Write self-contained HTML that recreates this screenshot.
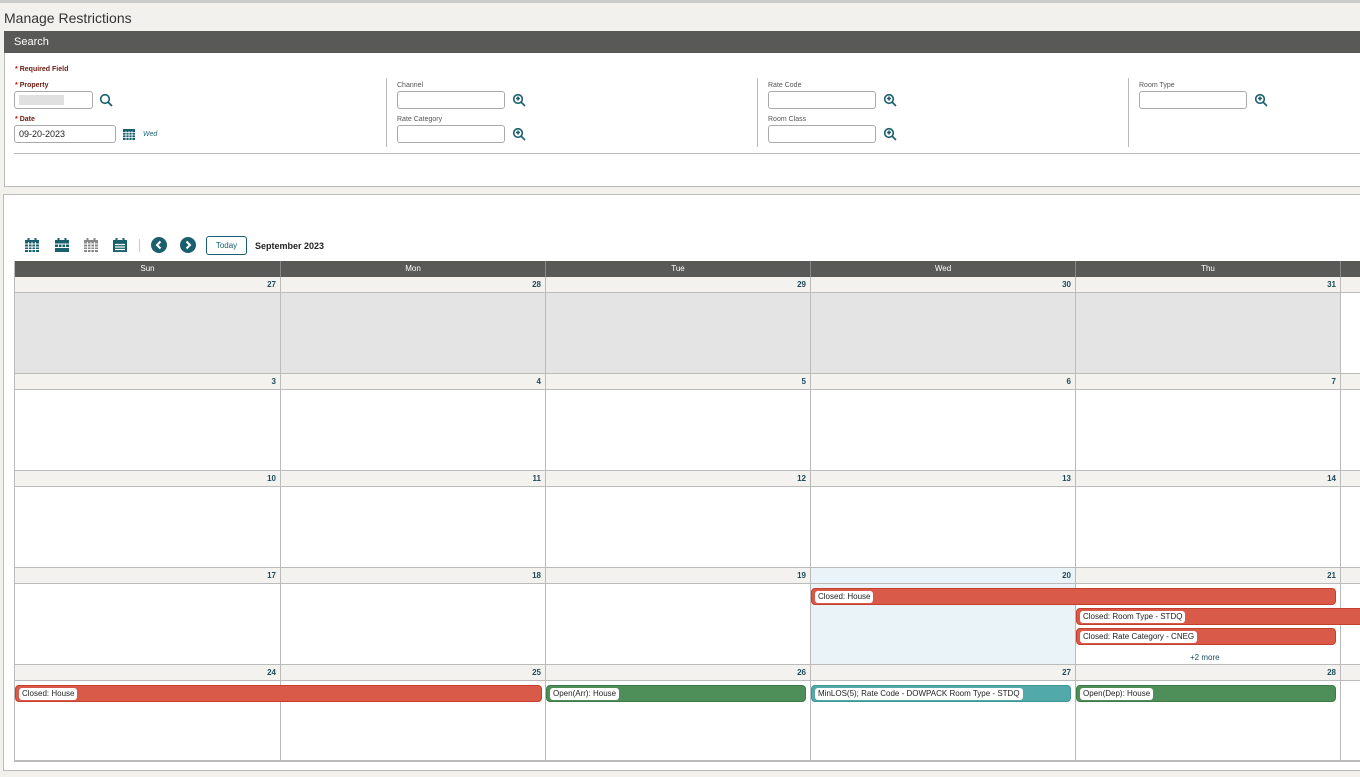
<!DOCTYPE html>
<html><head><meta charset="utf-8"><style>
*{margin:0;padding:0;box-sizing:border-box}
body{width:1360px;height:777px;overflow:hidden;background:#f2f1ee;font-family:"Liberation Sans",sans-serif;position:relative;color:#222}
.a{position:absolute}
.lbl{position:absolute;font-size:7px;color:#555}
.req{color:#6b1a10;font-weight:bold}
.req::before{content:"*";color:#d00;margin-right:2px}
.inp{position:absolute;height:18px;border:1px solid #aaa;border-radius:3px;background:#fff;font-size:9px;padding:3px 4px}
.vd{position:absolute;width:1px;background:#bbb;top:78px;height:69px}
.hd{position:absolute;top:261px;height:16px;background:#595957;color:#fff;font-size:8px;text-align:center;line-height:16px;border-right:1px solid #888}
.ds{position:absolute;height:16px;background:#f3f2ee;border-bottom:1px solid #bbb;border-right:1px solid #bbb;font-size:8px;font-weight:bold;color:#1d4a5c;text-align:right;padding-right:4px;line-height:15px}
.cb{position:absolute;height:81px;border-right:1px solid #bbb;border-bottom:1px solid #bbb;background:#fff}
.ev{position:absolute;height:17px;border-radius:4px;font-size:8px;padding:2px 3px}
.ev span{background:#fff;border-radius:3px;padding:1px 3px;display:inline-block;line-height:10px;color:#222}
.r{background:#d95a48;border:1px solid #c5402c}
.g{background:#4e8e58;border:1px solid #3d7a47}
.t{background:#52a9aa;border:1px solid #3f9496}
.mg{position:absolute;width:14px;height:14px}
</style></head><body>
<div class="a" style="top:0;left:0;width:1360px;height:3px;background:#ccc"></div>
<div class="a" style="top:10px;left:4px;font-size:14px;color:#333">Manage Restrictions</div>
<div class="a" style="top:31px;left:4px;width:1356px;height:22px;background:#595957;color:#fff;font-size:11px;padding:5px 10px">Search</div>
<div class="a" style="top:53px;left:4px;width:1356px;height:134px;background:#fff;border-left:1px solid #bbb;border-bottom:1px solid #bbb"></div>
<div class="lbl req" style="top:66px;left:15px">Required Field</div>
<div class="lbl req" style="top:82px;left:15px">Property</div>
<div class="inp" style="top:91px;left:14px;width:79px"><div style="width:45px;height:10px;background:#e0e0e0"></div></div>
<svg class="mg" style="left:99px;top:93px" viewBox="0 0 14 14"><circle cx="6" cy="6" r="4.3" fill="none" stroke="#1a5f6e" stroke-width="1.6"/><path d="M9 9l4 4" stroke="#1a5f6e" stroke-width="1.8"/></svg>
<div class="lbl req" style="top:116px;left:15px">Date</div>
<div class="inp" style="top:125px;left:14px;width:102px">09-20-2023</div>
<svg class="a" style="left:122px;top:127px" width="14" height="14" viewBox="0 0 14 14"><rect x="1" y="2" width="12" height="11" fill="#1a5f6e"/><path d="M1 5.5h12M1 8h12M1 10.5h12M4 4v9M7 4v9M10 4v9" stroke="#fff" stroke-width=".8"/></svg>
<div class="lbl" style="top:131px;left:143px;font-style:italic;color:#1a5f6e">Wed</div>
<div class="vd" style="left:386px"></div><div class="vd" style="left:757px"></div><div class="vd" style="left:1128px"></div>
<div class="lbl" style="top:82px;left:397px">Channel</div>
<div class="inp" style="top:91px;left:397px;width:108px"></div>
<div class="lbl" style="top:116px;left:397px">Rate Category</div>
<div class="inp" style="top:125px;left:397px;width:108px"></div>
<div class="lbl" style="top:82px;left:768px">Rate Code</div>
<div class="inp" style="top:91px;left:768px;width:108px"></div>
<div class="lbl" style="top:116px;left:768px">Room Class</div>
<div class="inp" style="top:125px;left:768px;width:108px"></div>
<div class="lbl" style="top:82px;left:1139px">Room Type</div>
<div class="inp" style="top:91px;left:1139px;width:108px"></div>
<svg class="mg" style="left:512px;top:93px" viewBox="0 0 14 14"><circle cx="6" cy="6" r="4.3" fill="none" stroke="#1a5f6e" stroke-width="1.6"/><path d="M9 9l4 4M6 3.5v4M4 5.5h4" stroke="#1a5f6e" stroke-width="1.6"/></svg>
<svg class="mg" style="left:512px;top:127px" viewBox="0 0 14 14"><circle cx="6" cy="6" r="4.3" fill="none" stroke="#1a5f6e" stroke-width="1.6"/><path d="M9 9l4 4M6 3.5v4M4 5.5h4" stroke="#1a5f6e" stroke-width="1.6"/></svg>
<svg class="mg" style="left:883px;top:93px" viewBox="0 0 14 14"><circle cx="6" cy="6" r="4.3" fill="none" stroke="#1a5f6e" stroke-width="1.6"/><path d="M9 9l4 4M6 3.5v4M4 5.5h4" stroke="#1a5f6e" stroke-width="1.6"/></svg>
<svg class="mg" style="left:883px;top:127px" viewBox="0 0 14 14"><circle cx="6" cy="6" r="4.3" fill="none" stroke="#1a5f6e" stroke-width="1.6"/><path d="M9 9l4 4M6 3.5v4M4 5.5h4" stroke="#1a5f6e" stroke-width="1.6"/></svg>
<svg class="mg" style="left:1254px;top:93px" viewBox="0 0 14 14"><circle cx="6" cy="6" r="4.3" fill="none" stroke="#1a5f6e" stroke-width="1.6"/><path d="M9 9l4 4M6 3.5v4M4 5.5h4" stroke="#1a5f6e" stroke-width="1.6"/></svg>
<div class="a" style="top:153px;left:14px;width:1346px;height:1px;background:#bbb"></div>

<div class="a" style="top:194px;left:3px;width:1357px;height:577px;background:#fff;border:1px solid #bbb;border-right:none"></div>
<svg class="a" style="left:24px;top:237px" width="16" height="16" viewBox="0 0 16 16"><rect x="1" y="3" width="14" height="12" fill="#1a5f6e"/><rect x="3.5" y="1" width="2" height="4" fill="#1a5f6e"/><rect x="10.5" y="1" width="2" height="4" fill="#1a5f6e"/><path d="M1 7h14M1 10h14M1 12.5h14M4.5 5v10M8 5v10M11.5 5v10" stroke="#fff" stroke-width=".9"/></svg>
<svg class="a" style="left:54px;top:237px" width="16" height="16" viewBox="0 0 16 16"><rect x="1" y="3" width="14" height="12" fill="#1a5f6e"/><rect x="3.5" y="1" width="2" height="4" fill="#1a5f6e"/><rect x="10.5" y="1" width="2" height="4" fill="#1a5f6e"/><path d="M1 7h14M1 10.5h14M4.5 7v3.5M8 7v3.5M11.5 7v3.5" stroke="#fff" stroke-width=".9"/></svg>
<svg class="a" style="left:83px;top:237px" width="16" height="16" viewBox="0 0 16 16"><rect x="1" y="3" width="14" height="12" fill="#888"/><rect x="3.5" y="1" width="2" height="4" fill="#888"/><rect x="10.5" y="1" width="2" height="4" fill="#888"/><path d="M1 7h14M1 10h14M1 12.5h14M4.5 5v10M8 5v10M11.5 5v10" stroke="#fff" stroke-width=".9"/></svg>
<svg class="a" style="left:112px;top:237px" width="16" height="16" viewBox="0 0 16 16"><rect x="1" y="3" width="14" height="12" fill="#1a5f6e"/><rect x="3.5" y="1" width="2" height="4" fill="#1a5f6e"/><rect x="10.5" y="1" width="2" height="4" fill="#1a5f6e"/><path d="M3 7.5h10M3 10h10M3 12.5h10" stroke="#fff" stroke-width="1.2"/></svg>
<div class="a" style="left:139px;top:239px;width:1px;height:13px;background:#ccc"></div>
<svg class="a" style="left:151px;top:237px" width="16" height="16" viewBox="0 0 16 16"><circle cx="8" cy="8" r="8" fill="#1a5f6e"/><path d="M9.5 4.5L6 8l3.5 3.5" fill="none" stroke="#fff" stroke-width="2"/></svg>
<svg class="a" style="left:180px;top:237px" width="16" height="16" viewBox="0 0 16 16"><circle cx="8" cy="8" r="8" fill="#1a5f6e"/><path d="M6.5 4.5L10 8l-3.5 3.5" fill="none" stroke="#fff" stroke-width="2"/></svg>
<div class="a" style="left:206px;top:236px;width:41px;height:19px;border:1px solid #1a5f6e;border-radius:3px;font-size:8px;color:#1a5f6e;text-align:center;line-height:17px">Today</div>
<div class="a" style="left:255px;top:241px;font-size:9px;font-weight:bold;color:#222">September 2023</div>

<div class="a" style="left:14px;top:261px;width:1346px;height:501px;border-left:1px solid #bbb;border-bottom:2px solid #bbb"></div>
<div class="hd" style="left:15px;width:266px">Sun</div>
<div class="hd" style="left:281px;width:265px">Mon</div>
<div class="hd" style="left:546px;width:265px">Tue</div>
<div class="hd" style="left:811px;width:265px">Wed</div>
<div class="hd" style="left:1076px;width:265px">Thu</div>
<div class="hd" style="left:1341px;width:30px"></div>

<div class="ds" style="top:277px;left:15px;width:266px">27</div><div class="ds" style="top:277px;left:281px;width:265px">28</div><div class="ds" style="top:277px;left:546px;width:265px">29</div><div class="ds" style="top:277px;left:811px;width:265px">30</div><div class="ds" style="top:277px;left:1076px;width:265px">31</div><div class="ds" style="top:277px;left:1341px;width:30px"></div>
<div class="cb" style="top:293px;left:15px;width:266px;background:#e4e4e4"></div><div class="cb" style="top:293px;left:281px;width:265px;background:#e4e4e4"></div><div class="cb" style="top:293px;left:546px;width:265px;background:#e4e4e4"></div><div class="cb" style="top:293px;left:811px;width:265px;background:#e4e4e4"></div><div class="cb" style="top:293px;left:1076px;width:265px;background:#e4e4e4"></div><div class="cb" style="top:293px;left:1341px;width:30px"></div>
<div class="ds" style="top:374px;left:15px;width:266px">3</div><div class="ds" style="top:374px;left:281px;width:265px">4</div><div class="ds" style="top:374px;left:546px;width:265px">5</div><div class="ds" style="top:374px;left:811px;width:265px">6</div><div class="ds" style="top:374px;left:1076px;width:265px">7</div><div class="ds" style="top:374px;left:1341px;width:30px"></div>
<div class="cb" style="top:390px;left:15px;width:266px"></div><div class="cb" style="top:390px;left:281px;width:265px"></div><div class="cb" style="top:390px;left:546px;width:265px"></div><div class="cb" style="top:390px;left:811px;width:265px"></div><div class="cb" style="top:390px;left:1076px;width:265px"></div><div class="cb" style="top:390px;left:1341px;width:30px"></div>
<div class="ds" style="top:471px;left:15px;width:266px">10</div><div class="ds" style="top:471px;left:281px;width:265px">11</div><div class="ds" style="top:471px;left:546px;width:265px">12</div><div class="ds" style="top:471px;left:811px;width:265px">13</div><div class="ds" style="top:471px;left:1076px;width:265px">14</div><div class="ds" style="top:471px;left:1341px;width:30px"></div>
<div class="cb" style="top:487px;left:15px;width:266px"></div><div class="cb" style="top:487px;left:281px;width:265px"></div><div class="cb" style="top:487px;left:546px;width:265px"></div><div class="cb" style="top:487px;left:811px;width:265px"></div><div class="cb" style="top:487px;left:1076px;width:265px"></div><div class="cb" style="top:487px;left:1341px;width:30px"></div>
<div class="ds" style="top:568px;left:15px;width:266px">17</div><div class="ds" style="top:568px;left:281px;width:265px">18</div><div class="ds" style="top:568px;left:546px;width:265px">19</div><div class="ds" style="top:568px;left:811px;width:265px;background:#eaf3f7">20</div><div class="ds" style="top:568px;left:1076px;width:265px">21</div><div class="ds" style="top:568px;left:1341px;width:30px"></div>
<div class="cb" style="top:584px;left:15px;width:266px"></div><div class="cb" style="top:584px;left:281px;width:265px"></div><div class="cb" style="top:584px;left:546px;width:265px"></div><div class="cb" style="top:584px;left:811px;width:265px;background:#eaf3f7"></div><div class="cb" style="top:584px;left:1076px;width:265px"></div><div class="cb" style="top:584px;left:1341px;width:30px"></div>
<div class="ds" style="top:665px;left:15px;width:266px">24</div><div class="ds" style="top:665px;left:281px;width:265px">25</div><div class="ds" style="top:665px;left:546px;width:265px">26</div><div class="ds" style="top:665px;left:811px;width:265px">27</div><div class="ds" style="top:665px;left:1076px;width:265px">28</div><div class="ds" style="top:665px;left:1341px;width:30px"></div>
<div class="cb" style="top:681px;left:15px;width:266px;height:80px"></div><div class="cb" style="top:681px;left:281px;width:265px;height:80px"></div><div class="cb" style="top:681px;left:546px;width:265px;height:80px"></div><div class="cb" style="top:681px;left:811px;width:265px;height:80px"></div><div class="cb" style="top:681px;left:1076px;width:265px;height:80px"></div><div class="cb" style="top:681px;left:1341px;width:30px;height:80px"></div>

<div class="ev r" style="left:811px;top:588px;width:525px"><span>Closed: House</span></div>
<div class="ev r" style="left:1076px;top:608px;width:290px"><span>Closed: Room Type - STDQ</span></div>
<div class="ev r" style="left:1076px;top:628px;width:260px"><span>Closed: Rate Category - CNEG</span></div>
<div class="a" style="left:1186px;top:653px;font-size:8px;color:#1d4a5c;background:#fff;padding:0 4px">+2 more</div>
<div class="ev r" style="left:15px;top:685px;width:527px"><span>Closed: House</span></div>
<div class="ev g" style="left:546px;top:685px;width:260px"><span>Open(Arr): House</span></div>
<div class="ev t" style="left:811px;top:685px;width:260px"><span>MinLOS(5); Rate Code - DOWPACK Room Type - STDQ</span></div>
<div class="ev g" style="left:1076px;top:685px;width:260px"><span>Open(Dep): House</span></div>
</body></html>
